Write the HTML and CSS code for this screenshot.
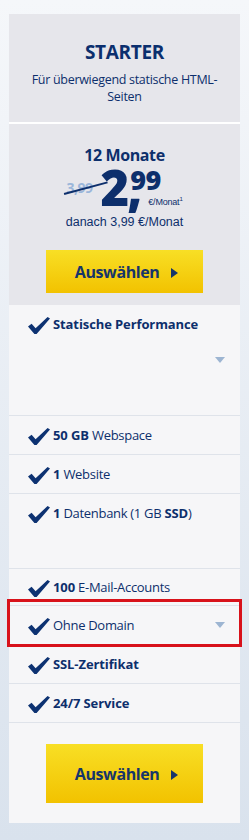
FILE: index.html
```html
<!DOCTYPE html>
<html lang="de">
<head>
    <meta charset="UTF-8">
    <title>Starter Tarif</title>
    <link rel="stylesheet" href="styles.css">
</head>
<body>
<div class="tariff">
    <!-- Kopf -->
    <div class="tariff-head">
        <h2>STARTER</h2>
        <p>Für überwiegend statische HTML-Seiten</p>
    </div>

    <!-- Preis -->
    <div class="tariff-price">
        <div class="term">12 Monate</div>
        <div class="price">
            <span class="old">3,99</span>
            <span class="big">2,</span>
            <span class="rest">
                <span class="cents">99</span>
                <span class="unit">€/Monat<sup>1</sup></span>
            </span>
        </div>
        <div class="after">danach 3,99 €/Monat</div>
        <button class="select-btn">Auswählen <span class="tri"></span></button>
    </div>

    <!-- Features -->
    <ul class="features">
        <li class="feature tall">
            <svg class="check" viewBox="0 0 22 17"><path d="M0 9.5 L3.6 6.8 L7.6 11.2 L19.6 0 L22 1.6 L8.6 17 L6.4 17 Z"/></svg>
            <span><b>Statische Performance</b></span>
            <span class="more"></span>
        </li>
        <li class="feature">
            <svg class="check" viewBox="0 0 22 17"><path d="M0 9.5 L3.6 6.8 L7.6 11.2 L19.6 0 L22 1.6 L8.6 17 L6.4 17 Z"/></svg>
            <span><b>50 GB</b> Webspace</span>
        </li>
        <li class="feature">
            <svg class="check" viewBox="0 0 22 17"><path d="M0 9.5 L3.6 6.8 L7.6 11.2 L19.6 0 L22 1.6 L8.6 17 L6.4 17 Z"/></svg>
            <span><b>1</b> Website</span>
        </li>
        <li class="feature mid">
            <svg class="check" viewBox="0 0 22 17"><path d="M0 9.5 L3.6 6.8 L7.6 11.2 L19.6 0 L22 1.6 L8.6 17 L6.4 17 Z"/></svg>
            <span><b>1</b> Datenbank (1 GB <b>SSD</b>)</span>
        </li>
        <li class="feature short">
            <svg class="check" viewBox="0 0 22 17"><path d="M0 9.5 L3.6 6.8 L7.6 11.2 L19.6 0 L22 1.6 L8.6 17 L6.4 17 Z"/></svg>
            <span><b>100</b> E-Mail-Accounts</span>
        </li>
        <li class="feature marked">
            <svg class="check" viewBox="0 0 22 17"><path d="M0 9.5 L3.6 6.8 L7.6 11.2 L19.6 0 L22 1.6 L8.6 17 L6.4 17 Z"/></svg>
            <span>Ohne Domain</span>
            <span class="more"></span>
        </li>
        <li class="feature">
            <svg class="check" viewBox="0 0 22 17"><path d="M0 9.5 L3.6 6.8 L7.6 11.2 L19.6 0 L22 1.6 L8.6 17 L6.4 17 Z"/></svg>
            <span><b>SSL-Zertifikat</b></span>
        </li>
        <li class="feature">
            <svg class="check" viewBox="0 0 22 17"><path d="M0 9.5 L3.6 6.8 L7.6 11.2 L19.6 0 L22 1.6 L8.6 17 L6.4 17 Z"/></svg>
            <span><b>24/7 Service</b></span>
        </li>
    </ul>

    <div class="tariff-foot">
        <button class="select-btn large">Auswählen <span class="tri"></span></button>
    </div>
</div>
</body>
</html>
```

FILE: styles.css
```css
html {
    background: linear-gradient(#f5f7fa, #d9e2ed);
    min-height: 100%;
}

body {
    margin: 0;
    padding: 14px 9px 13px;
    font-family: "Open Sans", "Noto Sans", sans-serif;
    color: #0d2f6c;
}

.tariff {
    width: 231px;
    background: #f6f6f8;
}

/* Kopf */
.tariff-head {
    height: 110px;
    box-sizing: border-box;
    padding: 27px 12px 0;
    background: #e6e6eb;
    border-bottom: 2px solid #fff;
    text-align: center;
}

.tariff-head h2 {
    margin: 0;
    font-size: 19px;
    line-height: 22px;
    font-weight: 700;
    letter-spacing: -0.3px;
    color: #0b2f6e;
}

.tariff-head p {
    margin: 8px 0 0;
    font-size: 12.5px;
    line-height: 17px;
    letter-spacing: -0.3px;
}

/* Preis */
.tariff-price {
    height: 181px;
    box-sizing: border-box;
    padding-top: 21px;
    background: #e6e6eb;
    text-align: center;
}

.term {
    font-size: 16px;
    line-height: 20px;
    font-weight: 700;
    letter-spacing: -0.4px;
}

.price {
    display: flex;
    justify-content: center;
    align-items: flex-start;
    height: 50px;
    margin-top: -2px;
    margin-bottom: 1px;
}

.price .old {
    position: relative;
    margin-top: 17px;
    margin-right: 8px;
    font-size: 14px;
    line-height: 16px;
    font-weight: 700;
    color: #9bb6da;
    letter-spacing: -0.5px;
}

.price .old::after {
    content: "";
    position: absolute;
    left: -2px;
    top: 13px;
    width: 45px;
    height: 1.5px;
    background: #0d2f6c;
    transform: rotate(-15deg);
    transform-origin: left center;
}

.price .big {
    font-size: 49px;
    line-height: 49px;
    font-weight: 800;
    letter-spacing: -2px;
}

.price .rest {
    display: flex;
    flex-direction: column;
    align-items: flex-start;
    margin-left: -10px;
    margin-top: 4px;
}

.price .cents {
    font-size: 27px;
    line-height: 26px;
    font-weight: 800;
    letter-spacing: -0.5px;
}

.price .unit {
    margin-top: 1px;
    padding-left: 18px;
    font-family: "Liberation Sans", Arial, sans-serif;
    font-size: 9px;
    line-height: 11px;
    letter-spacing: -0.2px;
}

.price .unit sup {
    font-size: 6px;
}

.after {
    font-family: "Liberation Sans", Arial, sans-serif;
    font-size: 12.5px;
    line-height: 16px;
}

.select-btn {
    display: block;
    width: 157px;
    height: 43px;
    margin: 20px auto 0;
    border: none;
    background: linear-gradient(#f8df25, #f2c200);
    font-family: "Open Sans", sans-serif;
    font-size: 16px;
    font-weight: 700;
    letter-spacing: -0.4px;
    color: #16356a;
    padding: 0 0 0 4px;
}

.select-btn .tri {
    display: inline-block;
    margin-left: 8px;
    width: 0;
    height: 0;
    border-top: 5.5px solid transparent;
    border-bottom: 5.5px solid transparent;
    border-left: 7px solid #16356a;
    vertical-align: 0;
}

.select-btn.large {
    height: 59px;
    margin-top: 0;
}

/* Features */
.features {
    list-style: none;
    margin: 0;
    padding: 0;
}

.feature {
    display: flex;
    align-items: flex-start;
    min-height: 39px;
    box-sizing: border-box;
    padding: 10px 10px 0 19px;
    border-bottom: 1px solid #dfe3ea;
    font-size: 13px;
    line-height: 18px;
    letter-spacing: -0.3px;
    position: relative;
}

.feature.tall {
    height: 111px;
}

.feature.mid {
    height: 75px;
}

.feature.short {
    min-height: 37px;
    height: 37px;
    padding-top: 9px;
}

.feature .check {
    flex: none;
    width: 22px;
    height: 17px;
    margin-right: 3px;
    margin-top: 2px;
    fill: #0d3272;
}

.feature b {
    font-weight: 700;
    letter-spacing: -0.1px;
}

.feature .more {
    align-self: center;
    margin-left: auto;
    margin-right: 5px;
    margin-top: -10px;
    width: 0;
    height: 0;
    border-left: 5px solid transparent;
    border-right: 5px solid transparent;
    border-top: 6px solid #9db5d2;
}

.feature.marked::after {
    content: "";
    position: absolute;
    left: -2px;
    right: -2px;
    top: -7px;
    bottom: -3px;
    border: 3px solid #d8121b;
}

.tariff-foot {
    height: 100px;
    box-sizing: border-box;
    padding-top: 21px;
}
```
